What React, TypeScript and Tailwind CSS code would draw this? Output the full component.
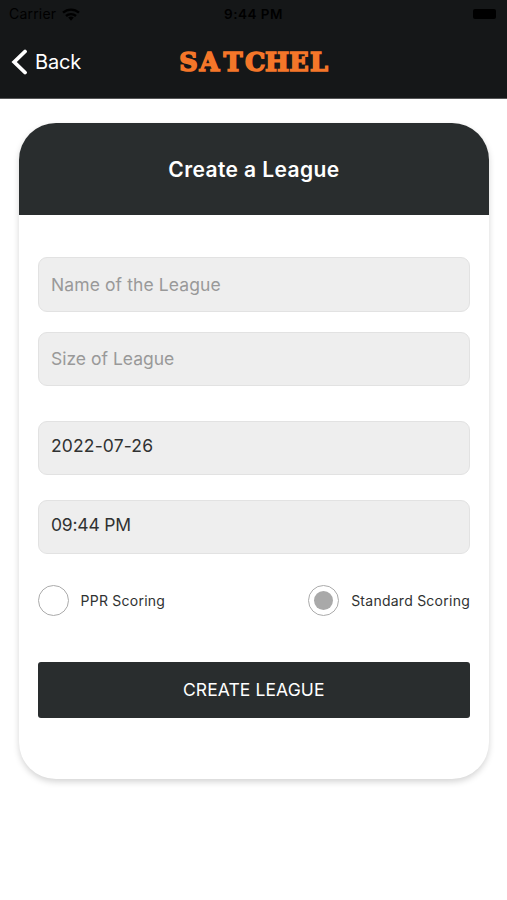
import React from "react";

function StatusBar() {
  return (
    <div className="grid h-[28px] grid-cols-3 items-center pl-[9px] pr-[11px] text-black">
      <div className="flex items-center gap-[6px]">
        <span className="text-[14px] leading-none tracking-[0.2px]">Carrier</span>
        <svg width="18" height="13" viewBox="0 0 18 13" fill="none" stroke="currentColor" strokeWidth="2.4">
          <path d="M1 4.7C5.6.6 12.4.6 17 4.7" />
          <path d="M4 8C6.8 5.5 11.2 5.5 14 8" />
          <path d="M6.2 9.6Q9 7.6 11.8 9.6L9 12.8Z" fill="currentColor" stroke="none" />
        </svg>
      </div>
      <span className="whitespace-nowrap pl-[2px] pt-px text-center text-[13.5px] font-semibold leading-none tracking-[0.5px]">9:44 PM</span>
      <div className="flex justify-end">
        <div className="h-[10px] w-[23px] rounded-[2px] bg-black" />
      </div>
    </div>
  );
}

function Field({ text, className }: { text: string; className: string }) {
  return (
    <div className={`flex items-center rounded-[9px] border border-[#e2e2e2] bg-[#eeeeee] pl-[12.5px] text-[17.5px] leading-none ${className}`}>
      <span>{text}</span>
    </div>
  );
}

function Radio({ label, checked }: { label: string; checked?: boolean }) {
  return (
    <div className="flex items-center gap-[12px]">
      <div className="flex size-[31px] items-center justify-center rounded-full border-[1.5px] border-[#ababab] bg-white">
        {checked && <div className="size-[19px] rounded-full bg-[#a9a9a9]" />}
      </div>
      <span className="text-[14px] leading-none tracking-[0.25px] text-[#303232]">{label}</span>
    </div>
  );
}

export default function App() {
  return (
    <div className="h-[900px] w-full overflow-hidden bg-white font-['Inter',sans-serif]">
      <header className="h-[99px] border-b border-[#555657] bg-[#151718]">
        <StatusBar />
        <div className="flex h-[68px] items-center pl-[11px]">
          <div className="flex w-[165px] items-center gap-[7px] text-white">
            <svg width="17" height="26" viewBox="0 0 17 26" fill="none" stroke="currentColor" strokeWidth="3.8" strokeLinecap="round">
              <path d="M14 2.5L3.2 13L14 23.5" />
            </svg>
            <span className="text-[20px] leading-none tracking-[-0.2px]">Back</span>
          </div>
          <svg width="158" height="36" viewBox="0 0 158 36">
            <text x="3.2 23.5 47.5 69 89 113.3 134" y="27.2" fill="#f47629" stroke="#f47629" strokeWidth="1.6" className="font-['DejaVu_Serif',serif] text-[25.5px] font-bold">SATCHEL</text>
          </svg>
        </div>
      </header>
      <main className="px-[19px] pt-[24px]">
        <section className="h-[656px] w-[470px] overflow-hidden rounded-[37px] bg-white shadow-[0_3px_6px_rgba(0,0,0,0.17)]">
          <div className="flex h-[92px] items-center justify-center bg-[#292d2e]">
            <h1 className="text-[21px] font-semibold leading-none tracking-[0.4px] text-white">Create a League</h1>
          </div>
          <div className="pl-[18.5px] pr-[19px] pt-[42px]">
            <Field text="Name of the League" className="h-[55px] tracking-[0.1px] text-[#999999]" />
            <Field text="Size of League" className="mt-[20px] h-[54px] text-[#999999]" />
            <Field text="2022-07-26" className="mt-[35px] h-[54px] pb-[5px] tracking-[0.15px] text-[#303232]" />
            <Field text="09:44 PM" className="mt-[25px] h-[54px] pb-[4px] tracking-[-0.2px] text-[#303232]" />
            <div className="mt-[31px] flex justify-between">
              <Radio label="PPR Scoring" />
              <Radio label="Standard Scoring" checked />
            </div>
            <button className="mt-[46px] flex h-[56px] w-full items-center justify-center rounded-[3px] bg-[#292d2e] text-[17.5px] leading-none tracking-[0.1px] text-white">
              CREATE LEAGUE
            </button>
          </div>
        </section>
      </main>
    </div>
  );
}
